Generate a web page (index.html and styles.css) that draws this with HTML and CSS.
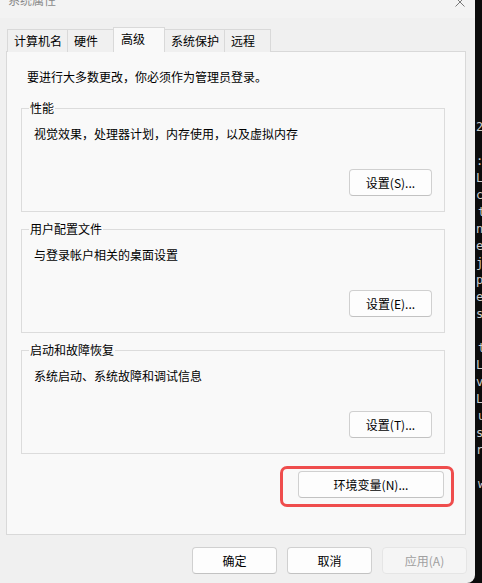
FILE: index.html
```html
<!DOCTYPE html>
<html lang="zh-CN">
<head>
<meta charset="utf-8">
<title>系统属性</title>
<link rel="stylesheet" href="styles.css">
</head>
<body>
<div class="screen">
  <div class="dialog">
    <div class="titlebar">
      <span class="title">系统属性</span>
      <svg class="close" width="10" height="10" viewBox="0 0 10 10"><path d="M0.5 0.5 L9.5 9.5 M9.5 0.5 L0.5 9.5" stroke="#7a7a7a" stroke-width="1" fill="none"/></svg>
    </div>
    <div class="tabs">
      <div class="tab">计算机名</div>
      <div class="tab">硬件</div>
      <div class="tab active">高级</div>
      <div class="tab">系统保护</div>
      <div class="tab">远程</div>
    </div>
    <div class="panel">
      <p class="intro">要进行大多数更改，你必须作为管理员登录。</p>
      <fieldset class="group">
        <legend>性能</legend>
        <p class="desc">视觉效果，处理器计划，内存使用，以及虚拟内存</p>
        <div class="actions"><button class="btn">设置(S)...</button></div>
      </fieldset>
      <fieldset class="group">
        <legend>用户配置文件</legend>
        <p class="desc">与登录帐户相关的桌面设置</p>
        <div class="actions"><button class="btn">设置(E)...</button></div>
      </fieldset>
      <fieldset class="group">
        <legend>启动和故障恢复</legend>
        <p class="desc">系统启动、系统故障和调试信息</p>
        <div class="actions"><button class="btn">设置(T)...</button></div>
      </fieldset>
      <div class="env-row">
        <div class="env-wrap">
          <button class="btn btn-env">环境变量(N)...</button>
          <span class="highlight"></span>
        </div>
      </div>
    </div>
    <div class="footer">
      <button class="btn btn-foot">确定</button>
      <button class="btn btn-foot">取消</button>
      <button class="btn btn-foot disabled">应用(A)</button>
    </div>
  </div>
  <div class="terminal">
    <div class="tl">2</div>
    <div class="tl"></div>
    <div class="tl">:</div>
    <div class="tl">Lo</div>
    <div class="tl">co</div>
    <div class="tl in">t</div>
    <div class="tl">ns</div>
    <div class="tl">er</div>
    <div class="tl">je</div>
    <div class="tl">pa</div>
    <div class="tl">e</div>
    <div class="tl">s</div>
    <div class="tl"></div>
    <div class="tl in">t</div>
    <div class="tl">Lo</div>
    <div class="tl">ve</div>
    <div class="tl">LT</div>
    <div class="tl in">u</div>
    <div class="tl">sh</div>
    <div class="tl">ri</div>
    <div class="tl"></div>
    <div class="tl in">w</div>
  </div>
</div>
</body>
</html>
```
FILE: styles.css
```css
* { box-sizing: border-box; }
html, body { margin: 0; padding: 0; }
body {
  background: #0c0c0c;
  font-family: "Noto Sans CJK SC", "Microsoft YaHei", sans-serif;
  font-size: 12px;
  color: #000;
  overflow: hidden;
}
.screen {
  display: flex;
  width: 482px;
  height: 583px;
}
.dialog {
  width: 475px;
  height: 583px;
  flex: none;
  background: #f0f0f0;
  border-bottom-right-radius: 8px;
  display: flex;
  flex-direction: column;
  overflow: hidden;
}
.titlebar {
  height: 18px;
  background: #f3f3f3;
  display: flex;
  justify-content: space-between;
  align-items: flex-start;
  padding: 0 10px 0 8px;
}
.title {
  margin-top: -8px;
  line-height: 16px;
  color: #8a8a8a;
}
.close { margin-top: -3px; }
.tabs {
  display: flex;
  align-items: flex-end;
  margin: 9px 0 -1px 7px;
  height: 25px;
  position: relative;
  z-index: 1;
}
.tab {
  height: 23px;
  min-width: 47px;
  padding: 0 5px 0 6px;
  border: 1px solid #d9d9d9;
  border-bottom: none;
  margin-right: -1px;
  background: #f0f0f0;
  line-height: 21px;
  white-space: nowrap;
}
.tab.active {
  height: 25px;
  min-width: 52px;
  padding-left: 7px;
  background: #f9f9f9;
  line-height: 21px;
  position: relative;
  z-index: 2;
}
.panel {
  margin-left: 6px;
  width: 460px;
  height: 484px;
  border: 1px solid #d9d9d9;
  background: #f9f9f9;
  display: flex;
  flex-direction: column;
}
.intro {
  margin: 17px 0 0 20px;
  line-height: 16px;
}
.group {
  margin: 15px 0 0 14px;
  width: 424px;
  border: 1px solid #dcdcdc;
  padding: 0 0 15px 0;
  min-width: 0;
}
.group + .group { margin-top: 9px; }
.group legend {
  margin-left: 7px;
  padding: 0 1px;
  line-height: 16px;
}
.desc {
  margin: 10px 0 0 12px;
  line-height: 16px;
}
.actions {
  display: flex;
  justify-content: flex-end;
  margin-top: 27px;
  padding-right: 12px;
}
.btn {
  font: inherit;
  color: #000;
  height: 27px;
  width: 83px;
  background: #fdfdfd;
  border: 1px solid #d0d0d0;
  border-bottom-color: #c2c2c2;
  border-radius: 4px;
  padding: 0;
  line-height: 25px;
  text-align: center;
}
.env-row {
  width: 424px;
  margin: 17px 0 0 14px;
  display: flex;
  justify-content: flex-end;
  padding-right: 1px;
}
.env-wrap { position: relative; display: flex; }
.btn-env { width: 146px; }
.highlight {
  position: absolute;
  left: -18px;
  top: -5px;
  right: -10px;
  bottom: -9px;
  border: 3px solid #ef4d4d;
  border-radius: 7px;
  pointer-events: none;
}
.footer {
  display: flex;
  justify-content: flex-end;
  gap: 10px;
  margin-top: 12px;
  padding-right: 8px;
}
.btn-foot { width: 85px; }
.btn.disabled {
  color: #a0a0a0;
  background: #f5f5f5;
  border-color: #e5e5e5;
}
.terminal {
  flex: 1;
  overflow: hidden;
  background: #0c0c0c;
  padding-top: 119px;
  font-family: "DejaVu Sans Mono", monospace;
  font-size: 12px;
  line-height: 17px;
  color: #cccccc;
}
.tl {
  height: 17px;
  padding-left: 1px;
  white-space: pre;
}
.tl.in { padding-left: 3px; }
```
